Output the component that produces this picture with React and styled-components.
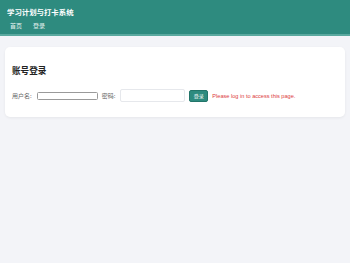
import React from 'react';
import styled, { createGlobalStyle } from 'styled-components';

const GlobalStyle = createGlobalStyle`
  html, body {
    margin: 0;
    padding: 0;
    background: #f3f4f8;
    font-family: "Noto Sans CJK SC", "Noto Sans", sans-serif;
  }
`;

const Header = styled.header`
  background: #2e8b7f;
  border-bottom: 2px solid #5aa99f;
  padding: 6px 7px 3px;
  height: 25px;
`;

const Title = styled.div`
  color: #fff;
  font-size: 7.4px;
  font-weight: 700;
  line-height: 11px;
`;

const Nav = styled.nav`
  display: flex;
  gap: 11px;
  padding-left: 3px;
  margin-top: 4px;
`;

const NavLink = styled.a`
  color: #e6f2f0;
  font-size: 6px;
  line-height: 9px;
  text-decoration: none;
`;

const Main = styled.main`
  padding: 11px 5px;
`;

const Card = styled.section`
  background: #fff;
  border-radius: 5px;
  box-shadow: 0 1px 3px rgba(0, 0, 0, 0.06);
  padding: 17px 7px 15px;
`;

const Heading = styled.h2`
  margin: 0;
  font-size: 8.6px;
  font-weight: 700;
  color: #222;
  line-height: 12px;
`;

const Form = styled.form`
  display: flex;
  align-items: center;
  margin-top: 13px;
`;

const Label = styled.label`
  font-size: 6px;
  color: #666;
  margin-right: 5px;
`;

const Input = styled.input`
  box-sizing: border-box;
  width: ${p => p.$w}px;
  height: ${p => p.$h}px;
  border: 1px solid ${p => (p.$light ? '#e6e8ec' : '#9a9a9a')};
  border-radius: ${p => (p.$light ? '2px' : '1.5px')};
  margin-right: 4px;
  padding: 0;
  background: #fff;
`;

const Button = styled.button`
  box-sizing: border-box;
  width: 19px;
  height: 12px;
  background: #2e8b7f;
  color: #fff;
  border: 1px solid #23756a;
  border-radius: 2px;
  font-size: 5px;
  padding: 0;
  margin-right: 4px;
  font-family: inherit;
`;

const Error = styled.span`
  color: #dc3a3e;
  font-size: 5.6px;
  font-family: "Liberation Sans", Arial, sans-serif;
`;

export default function App() {
  return (
    <>
      <GlobalStyle />
      <Header>
        <Title>学习计划与打卡系统</Title>
        <Nav>
          <NavLink href="#">首页</NavLink>
          <NavLink href="#">登录</NavLink>
        </Nav>
      </Header>
      <Main>
        <Card>
          <Heading>账号登录</Heading>
          <Form onSubmit={e => e.preventDefault()}>
            <Label>用户名:</Label>
            <Input $w={61} $h={8} />
            <Label>密码:</Label>
            <Input $w={65} $h={13} $light type="password" />
            <Button type="submit">登录</Button>
            <Error>Please log in to access this page.</Error>
          </Form>
        </Card>
      </Main>
    </>
  );
}
